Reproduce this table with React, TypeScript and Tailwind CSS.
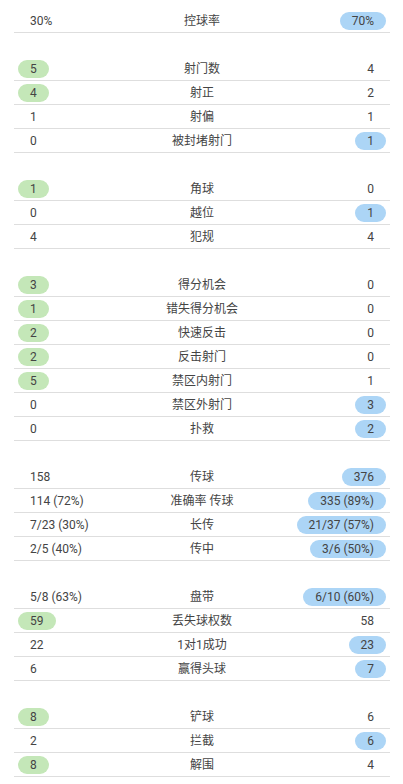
import React from "react";

type Stat = { label: string; home: string; away: string; win?: "home" | "away" };

const sections: Stat[][] = [
  [{ label: "控球率", home: "30%", away: "70%", win: "away" }],
  [
    { label: "射门数", home: "5", away: "4", win: "home" },
    { label: "射正", home: "4", away: "2", win: "home" },
    { label: "射偏", home: "1", away: "1" },
    { label: "被封堵射门", home: "0", away: "1", win: "away" },
  ],
  [
    { label: "角球", home: "1", away: "0", win: "home" },
    { label: "越位", home: "0", away: "1", win: "away" },
    { label: "犯规", home: "4", away: "4" },
  ],
  [
    { label: "得分机会", home: "3", away: "0", win: "home" },
    { label: "错失得分机会", home: "1", away: "0", win: "home" },
    { label: "快速反击", home: "2", away: "0", win: "home" },
    { label: "反击射门", home: "2", away: "0", win: "home" },
    { label: "禁区内射门", home: "5", away: "1", win: "home" },
    { label: "禁区外射门", home: "0", away: "3", win: "away" },
    { label: "扑救", home: "0", away: "2", win: "away" },
  ],
  [
    { label: "传球", home: "158", away: "376", win: "away" },
    { label: "准确率 传球", home: "114 (72%)", away: "335 (89%)", win: "away" },
    { label: "长传", home: "7/23 (30%)", away: "21/37 (57%)", win: "away" },
    { label: "传中", home: "2/5 (40%)", away: "3/6 (50%)", win: "away" },
  ],
  [
    { label: "盘带", home: "5/8 (63%)", away: "6/10 (60%)", win: "away" },
    { label: "丢失球权数", home: "59", away: "58", win: "home" },
    { label: "1对1成功", home: "22", away: "23", win: "away" },
    { label: "赢得头球", home: "6", away: "7", win: "away" },
  ],
  [
    { label: "铲球", home: "8", away: "6", win: "home" },
    { label: "拦截", home: "2", away: "6", win: "away" },
    { label: "解围", home: "8", away: "4", win: "home" },
  ],
];

const Value = ({ text, pill }: { text: string; pill?: "green" | "blue" }) => (
  <span
    className={
      "inline-flex h-[18px] items-center rounded-full px-3 " +
      (pill === "green" ? "bg-[#c4e7b8]" : pill === "blue" ? "bg-[#acd5f6]" : "")
    }
  >
    {text}
  </span>
);

const StatRow = ({ stat }: { stat: Stat }) => (
  <div className="grid h-6 grid-cols-[1fr_auto_1fr] items-center border-b border-[#dedede] px-1">
    <div className="flex justify-start">
      <Value text={stat.home} pill={stat.win === "home" ? "green" : undefined} />
    </div>
    <div className="text-center">{stat.label}</div>
    <div className="flex justify-end">
      <Value text={stat.away} pill={stat.win === "away" ? "blue" : undefined} />
    </div>
  </div>
);

export default function App() {
  return (
    <div
      className="min-h-screen bg-white pl-[14px] pr-[13px] pt-[9px] text-[12px] leading-none text-[#444]"
      style={{ fontFamily: 'Roboto, "Noto Sans CJK SC", sans-serif' }}
    >
      <div className="flex flex-col gap-6">
        {sections.map((rows, i) => (
          <section key={i} className="flex flex-col">
            {rows.map((s) => (
              <StatRow key={s.label} stat={s} />
            ))}
          </section>
        ))}
      </div>
    </div>
  );
}
